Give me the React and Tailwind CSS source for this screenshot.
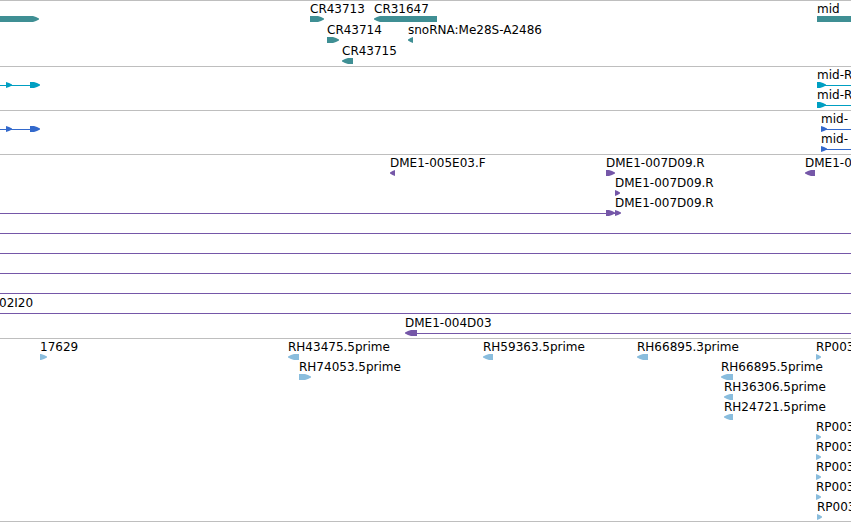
import React from 'react';

const STROKES = {
  teal: '#3f8f94',
  cyan: '#009fc2',
  blue: '#3369cc',
  purple: '#7557a8',
  sky: '#8abddd',
};

// x and w are in screen pixels, one row per list entry.
// line: true runs on to the right edge of the view.
const TRACKS = [
  {
    name: 'Gene',
    color: 'teal',
    rowClass: 'h-[21px]',
    rows: [
      [
        { x: -20, w: 59, dir: 'right' },
        { x: 310, w: 14, dir: 'right', label: 'CR43713' },
        { x: 374, w: 63, dir: 'left', label: 'CR31647' },
        { x: 817, w: 60, label: 'mid' },
      ],
      [
        { x: 327, w: 12, dir: 'right', label: 'CR43714' },
        { x: 408, w: 5, dir: 'left', label: 'snoRNA:Me28S-A2486' },
      ],
      [{ x: 342, w: 11, dir: 'left', label: 'CR43715' }],
    ],
  },
  {
    name: 'Transcript',
    color: 'cyan',
    rows: [
      [
        { x: 0, line: 31 },
        { x: 6, w: 6, dir: 'right' },
        { x: 30, w: 10, dir: 'right' },
        { x: 817, line: true },
        { x: 817, w: 9, dir: 'right', label: 'mid-R' },
      ],
      [
        { x: 817, line: true },
        { x: 817, w: 9, dir: 'right', label: 'mid-R' },
      ],
    ],
  },
  {
    name: 'CDS',
    color: 'blue',
    rows: [
      [
        { x: 0, line: 31 },
        { x: 6, w: 6, dir: 'right' },
        { x: 30, w: 10, dir: 'right' },
        { x: 821, line: true },
        { x: 821, w: 6, dir: 'right', label: 'mid-' },
      ],
      [
        { x: 821, line: true },
        { x: 821, w: 6, dir: 'right', label: 'mid-' },
      ],
    ],
  },
  {
    name: 'BAC',
    color: 'purple',
    rows: [
      [
        { x: 390, w: 5, dir: 'left', label: 'DME1-005E03.F' },
        { x: 606, w: 9, dir: 'right', label: 'DME1-007D09.R' },
        { x: 805, w: 10, dir: 'left', label: 'DME1-0' },
      ],
      [{ x: 615, w: 5, dir: 'right', label: 'DME1-007D09.R' }],
      [
        { x: 0, line: 616 },
        { x: 606, w: 9, dir: 'right' },
        { x: 615, w: 6, dir: 'right', label: 'DME1-007D09.R' },
      ],
      [{ x: 0, line: true }],
      [{ x: 0, line: true }],
      [{ x: 0, line: true }],
      [{ x: 0, line: true }],
      [{ x: -1, line: true, label: '02I20' }],
      [
        { x: 405, w: 12, dir: 'left', label: 'DME1-004D03' },
        { x: 417, line: true },
      ],
    ],
  },
  {
    name: 'EST',
    color: 'sky',
    rows: [
      [
        { x: 40, w: 7, dir: 'right', label: '17629' },
        { x: 288, w: 11, dir: 'left', label: 'RH43475.5prime' },
        { x: 483, w: 10, dir: 'left', label: 'RH59363.5prime' },
        { x: 637, w: 11, dir: 'left', label: 'RH66895.3prime' },
        { x: 816, w: 5, dir: 'right', label: 'RP003' },
      ],
      [
        { x: 299, w: 12, dir: 'right', label: 'RH74053.5prime' },
        { x: 721, w: 12, dir: 'left', label: 'RH66895.5prime' },
      ],
      [{ x: 724, w: 9, dir: 'left', label: 'RH36306.5prime' }],
      [{ x: 724, w: 9, dir: 'left', label: 'RH24721.5prime' }],
      [{ x: 816, w: 5, dir: 'right', label: 'RP003' }],
      [{ x: 816, w: 5, dir: 'right', label: 'RP003' }],
      [{ x: 816, w: 5, dir: 'right', label: 'RP003' }],
      [{ x: 816, w: 5, dir: 'right', label: 'RP003' }],
      [{ x: 817, w: 5, dir: 'right', label: 'RP003' }],
    ],
  },
];

const glyphPoints = (w, dir) => {
  const tip = Math.min(w, 6);
  if (dir === 'right') {
    return `0,0 ${w - tip},0 ${w - tip / 2},1 ${w},2.5 ${w},3.5 ${w - tip / 2},5 ${w - tip},6 0,6`;
  }
  if (dir === 'left') {
    return `${w},0 ${tip},0 ${tip / 2},1 0,2.5 0,3.5 ${tip / 2},5 ${tip},6 ${w},6`;
  }
  return `0,0 ${w},0 ${w},6 0,6`;
};

const Feature = ({ feature, color }) => {
  const { x, w, dir, line, label } = feature;

  return (
    <>
      {label && (
        <span className="absolute top-0 whitespace-nowrap" style={{ left: x }}>
          {label}
        </span>
      )}
      {line && (
        <div
          className="absolute top-[18px] right-0 h-px"
          style={{
            left: x,
            width: line === true ? undefined : line,
            backgroundColor: STROKES[color],
          }}
        />
      )}
      {w && (
        <svg
          className="absolute top-[15px]"
          style={{ left: x }}
          width={w}
          height="6"
          fill={STROKES[color]}
          aria-hidden="true"
        >
          <polygon points={glyphPoints(w, dir)} />
        </svg>
      )}
    </>
  );
};

const Track = ({ track }) => (
  <section
    aria-label={track.name}
    className="border-t border-[#bebebe] pb-[3px] first:pb-[2px] last:border-b last:pb-[2px]"
  >
    {track.rows.map((row, i) => (
      <div key={i} className={`relative ${track.rowClass || 'h-5'}`}>
        {row.map((feature, j) => (
          <Feature key={j} feature={feature} color={track.color} />
        ))}
      </div>
    ))}
  </section>
);

export default function App() {
  return (
    <main className="w-full overflow-hidden bg-white font-['DejaVu_Sans',sans-serif] text-[12px] leading-[17px] text-black">
      {TRACKS.map((track) => (
        <Track key={track.name} track={track} />
      ))}
    </main>
  );
}
